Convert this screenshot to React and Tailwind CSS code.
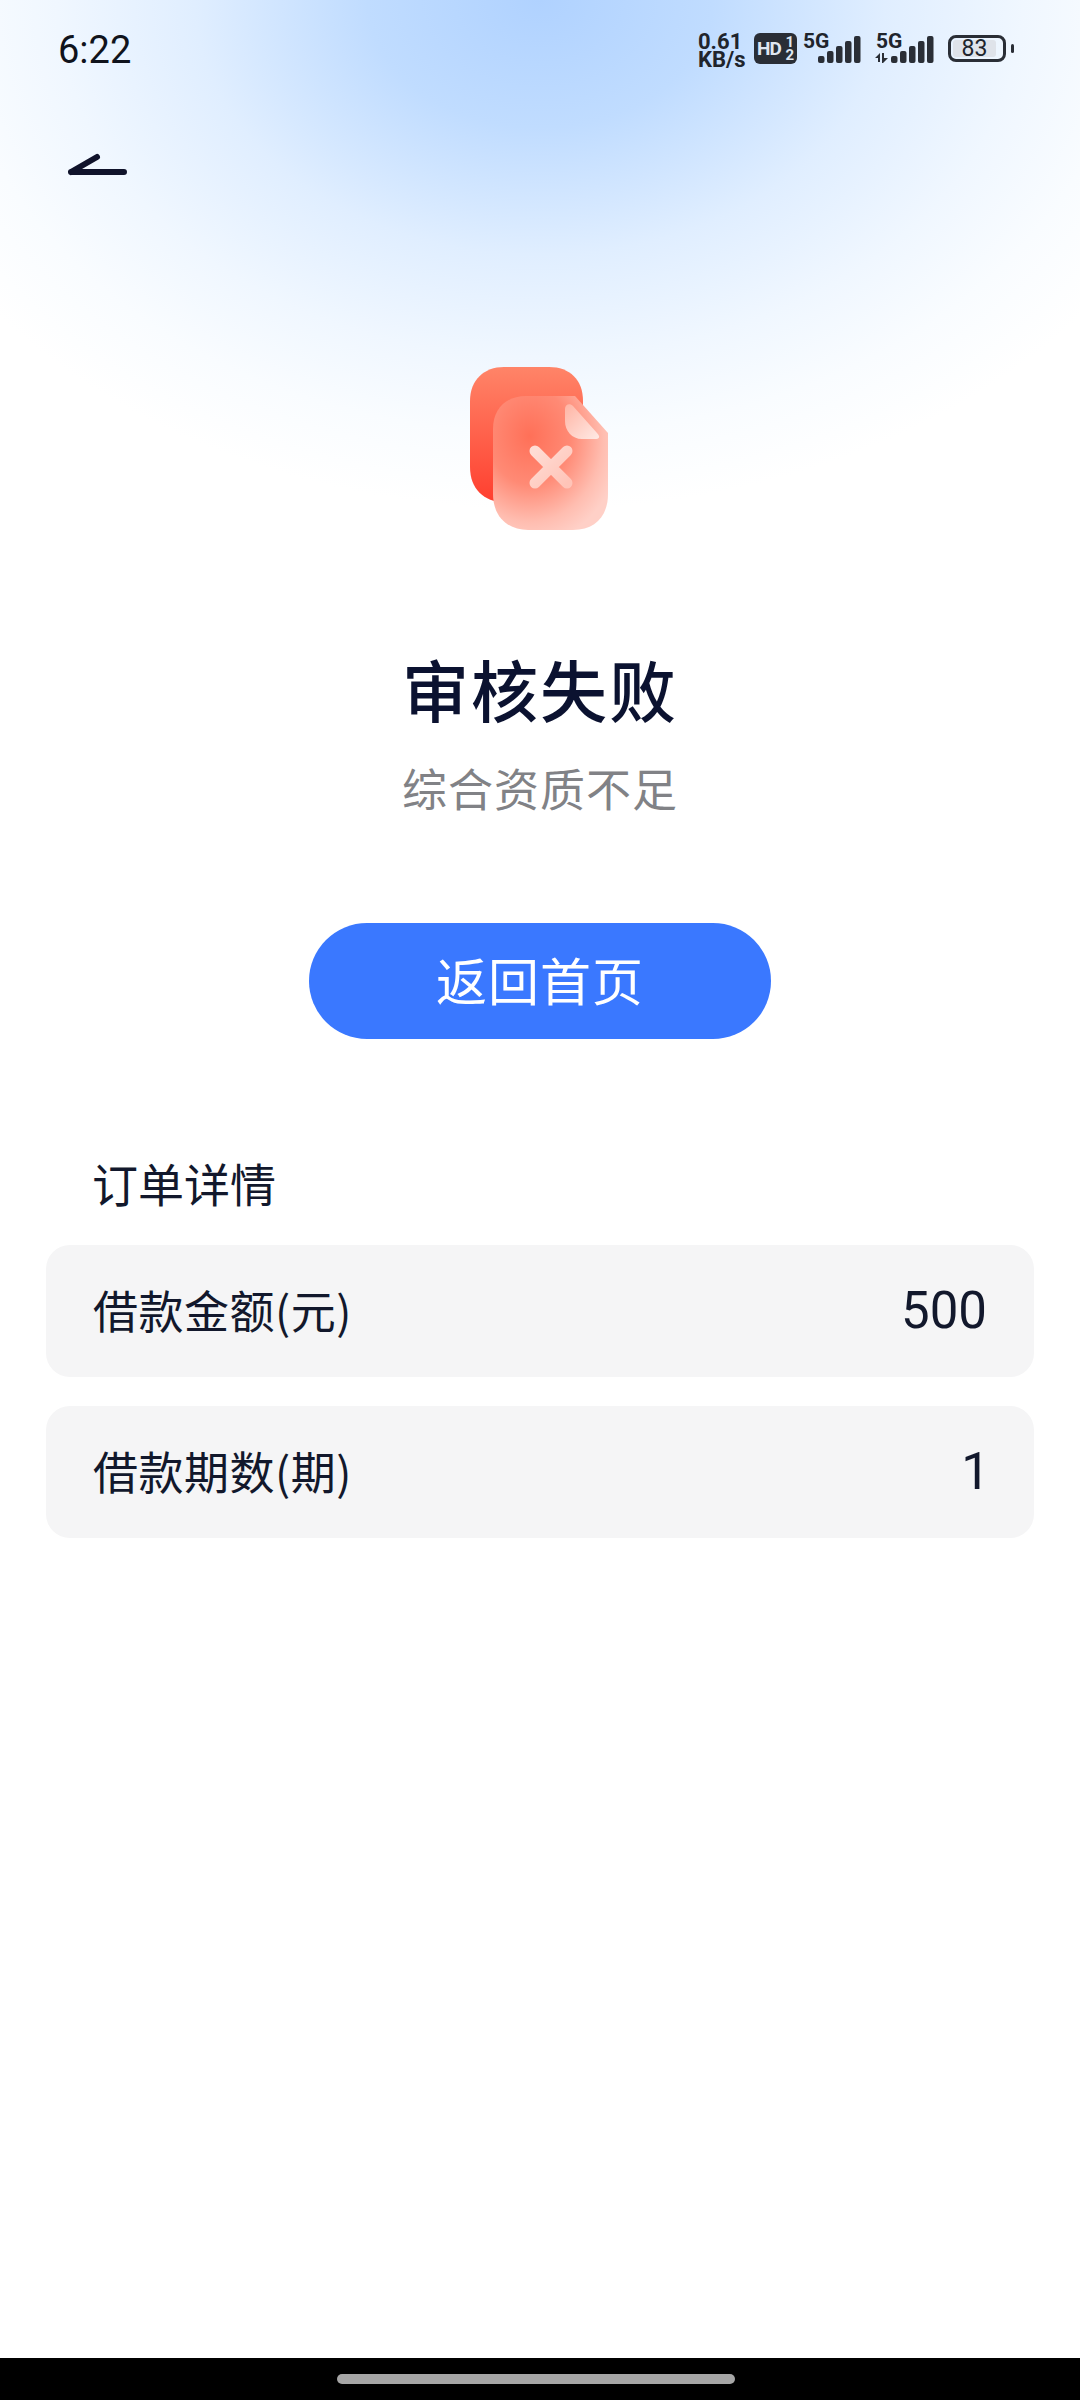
const Signal = ({ arrows }) => (
  <div className="grid h-[32px] w-[62px] grid-cols-1 grid-rows-1">
    <span className="col-start-1 row-start-1 pl-[1px] text-[21px] font-bold leading-[16px] text-[#20242c]">5G</span>
    <svg className="col-start-1 row-start-1" width="62" height="32" viewBox="0 0 62 32" fill="#2a2e36">
      {arrows && (
        <>
          <path d="M0 25L5 20V29H3V25Z" />
          <path d="M7 20H9V25H13L8 30H7Z" />
        </>
      )}
      <rect x="16" y="23" width="6.5" height="7" rx="2" />
      <rect x="25" y="18" width="6.5" height="12" rx="2" />
      <rect x="34" y="13" width="6.5" height="17" rx="2" />
      <rect x="43" y="8" width="6.5" height="22" rx="2" />
      <rect x="52" y="3" width="6.5" height="27" rx="2" />
    </svg>
  </div>
);

const StatusBar = () => (
  <div className="flex h-[100px] items-start justify-between pl-[58px] pr-[66px] pt-[28px] font-['Roboto',sans-serif]">
    <span className="text-[38px] leading-[44px] text-[#10131c]">6:22</span>
    <div className="flex items-start pt-[5px]">
      <div className="w-[52px] text-[22px] font-bold leading-[18px] text-[#20242c]">
        <div>0.61</div>
        <div>KB/s</div>
      </div>
      <div className="ml-[4px] flex h-[31px] w-[43px] items-center justify-between rounded-[6px] bg-[#2a2e36] px-[3px] font-bold leading-none text-[#dfe6f0]">
        <span className="text-[19px] tracking-[-1px]">HD</span>
        <span className="flex flex-col items-center text-[15px] leading-[13px]">
          <span>1</span>
          <span>2</span>
        </span>
      </div>
      <div className="ml-[5px] flex gap-[11px]">
        <Signal />
        <Signal arrows />
      </div>
      <div className="ml-[11px] flex items-center pt-[2px]">
        <div className="flex h-[27px] w-[58px] rounded-[8px] border-[3px] border-[#2a2e36] p-[2px]">
          <div className="flex w-[43px] items-center justify-center rounded-[3px] bg-[#dfe3ea] text-[23px] leading-none text-[#20242c]">83</div>
        </div>
        <div className="ml-[5px] h-[9px] w-[3px] rounded-full bg-[#2a2e36]" />
      </div>
    </div>
  </div>
);

const FailIcon = () => (
  <svg width="138" height="163" viewBox="0 0 138 163">
    <defs>
      <linearGradient id="back" x1="0" y1="0" x2="0" y2="1">
        <stop offset="0" stopColor="#ff8468" />
        <stop offset="1" stopColor="#ff3f2f" />
      </linearGradient>
      <radialGradient id="front" cx="0.32" cy="0.3" r="0.8">
        <stop offset="0" stopColor="#ff7058" />
        <stop offset="0.45" stopColor="#ff8a75" />
        <stop offset="0.8" stopColor="#ffbdb0" />
        <stop offset="1" stopColor="#ffd0c7" />
      </radialGradient>
      <linearGradient id="fold" x1="0" y1="0" x2="1" y2="1">
        <stop offset="0" stopColor="#ffb4a4" />
        <stop offset="1" stopColor="#ffeae5" />
      </linearGradient>
      <linearGradient id="cross" x1="0" y1="0" x2="1" y2="1">
        <stop offset="0" stopColor="#ffdcd4" />
        <stop offset="1" stopColor="#ffc4b8" />
      </linearGradient>
    </defs>
    <path d="M34 0H79C100 0 113 13 113 34V100C113 122 100 135 79 135H34C14 135 0 122 0 100V34C0 13 14 0 34 0Z" fill="url(#back)" />
    <path d="M56 29H105L138 66V127C138 149 125 163 103 163H58C37 163 23 149 23 127V62C23 42 36 29 56 29Z" fill="url(#front)" />
    <path d="M95 42C95 37 100 36 103 39L127 66C131 70 129 72 125 72H112C102 72 95 64 95 54Z" fill="url(#fold)" />
    <path d="M65 84L97 116M97 84L65 116" stroke="url(#cross)" strokeWidth="11" strokeLinecap="round" />
  </svg>
);

const DetailRow = ({ label, value, valueClass }) => (
  <div className="flex h-[132px] items-center justify-between rounded-[24px] bg-[#f5f5f6] px-[47px] text-[#12182c]">
    <span className="pb-[2px] text-[45px] tracking-[0.5px]">{label}</span>
    <span className={`font-['Roboto',sans-serif] text-[51px] ${valueClass}`}>{value}</span>
  </div>
);

export default function App() {
  return (
    <div
      className="flex h-[2400px] w-[1080px] flex-col overflow-hidden bg-white bg-[radial-gradient(ellipse_690px_510px_at_50%_0%,#b0d2ff_0%,#c0dcff_25%,#e0eeff_50%,#f0f7ff_70%,#f9fcff_85%,#ffffff_100%)]"
      style={{ fontFamily: '"Noto Sans CJK SC", Roboto, sans-serif' }}
    >
      <div className="flex flex-1 flex-col">
        <StatusBar />
        <div className="pl-[68px] pt-[50px]">
          <svg width="60" height="30" viewBox="0 0 60 30">
            <path d="M3 22H56M3 22L29 7" stroke="#10132b" strokeWidth="6" strokeLinecap="round" fill="none" />
          </svg>
        </div>
        <div className="flex flex-col items-center pt-[187px]">
          <div className="pr-[3px]"><FailIcon /></div>
          <h1 className="mt-[114px] text-[67px] font-medium leading-[88px] tracking-[2px] text-[#0b1230]">审核失败</h1>
          <p className="mt-[24px] text-[45px] leading-[64px] tracking-[1px] text-[#818286]">综合资质不足</p>
          <button className="mt-[103px] h-[116px] w-[462px] rounded-full bg-[#3a78ff] pb-[4px] text-[51px] tracking-[1px] text-white">返回首页</button>
        </div>
        <div className="px-[46px] pt-[113px]">
          <h2 className="pl-[46px] text-[46px] leading-[60px] text-[#12182c]">订单详情</h2>
          <div className="mt-[33px] flex flex-col gap-[29px]">
            <DetailRow label="借款金额(元)" value="500" valueClass="" />
            <DetailRow label="借款期数(期)" value="1" valueClass="-mr-[3px]" />
          </div>
        </div>
      </div>
      <div className="flex h-[42px] justify-center bg-black pr-[8px] pt-[16px]">
        <div className="h-[10px] w-[398px] rounded-full bg-[#a6a6a6]" />
      </div>
    </div>
  );
}
